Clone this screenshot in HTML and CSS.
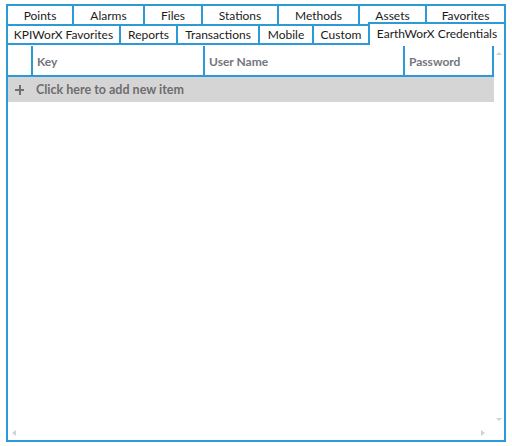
FILE: index.html
```html
<!DOCTYPE html>
<html lang="en">
<head>
  <meta charset="UTF-8">
  <meta name="viewport" content="width=device-width, initial-scale=1.0">
  <title>EarthWorX Credentials</title>
  <link rel="stylesheet" href="styles.css">
</head>
<body>
  <div class="tab-control">
    <div class="tab-row row-top">
      <div class="tab tab-points">Points</div>
      <div class="tab tab-alarms">Alarms</div>
      <div class="tab tab-files">Files</div>
      <div class="tab tab-stations">Stations</div>
      <div class="tab tab-methods">Methods</div>
      <div class="tab tab-assets">Assets</div>
      <div class="tab tab-favorites">Favorites</div>
    </div>
    <div class="tab-row row-bottom">
      <div class="tab tab-kpi">KPIWorX Favorites</div>
      <div class="tab tab-reports">Reports</div>
      <div class="tab tab-transactions">Transactions</div>
      <div class="tab tab-mobile">Mobile</div>
      <div class="tab tab-custom">Custom</div>
      <div class="tab tab-credentials selected">EarthWorX Credentials</div>
    </div>

    <div class="tab-panel">
      <div class="grid-main">
        <div class="grid">
          <div class="grid-header">
            <div class="cell cell-indicator"></div>
            <div class="cell cell-key">Key</div>
            <div class="cell cell-user">User Name</div>
            <div class="cell cell-password">Password</div>
          </div>
          <div class="new-row">
            <span class="plus"></span>
            <span>Click here to add new item</span>
          </div>
          <div class="grid-body"></div>
        </div>
        <div class="vscroll">
          <span class="arrow arrow-up"></span>
          <span class="arrow arrow-down"></span>
        </div>
      </div>
      <div class="hscroll">
        <span class="arrow arrow-left"></span>
        <span class="arrow arrow-right"></span>
      </div>
    </div>
  </div>
</body>
</html>
```
FILE: styles.css
```css
* {
  box-sizing: border-box;
}
body {
  margin: 0;
  padding: 4px 0 0 6px;
  background-color: #fff;
  font-family: Lato, "Noto Sans", sans-serif;
  font-size: 12px;
  color: #1b1b1b;
}
.tab-control {
  width: 500px;
}
.tab-row {
  display: flex;
  align-items: flex-start;
}
.tab {
  display: flex;
  align-items: center;
  justify-content: center;
  flex: 0 0 auto;
  border: 2px solid #2b9ad5;
  border-bottom: none;
  background-color: #fff;
  white-space: nowrap;
  margin-left: -2px;
}
.tab:first-child {
  margin-left: 0;
}
.row-top .tab {
  height: 20px;
}
.row-bottom .tab {
  height: 19px;
}
.row-bottom .tab.selected {
  position: relative;
  z-index: 1;
  height: 23px;
  margin-top: -2px;
  margin-bottom: -2px;
  padding-bottom: 3px;
}

.tab-points { width: 68px; }
.tab-alarms { width: 73px; }
.tab-files { width: 60px; }
.tab-stations { width: 78px; }
.tab-methods { width: 83px; }
.tab-assets { width: 69px; }
.tab-favorites { width: 81px; }

.tab-kpi { width: 115px; }
.tab-reports { width: 59px; }
.tab-transactions { width: 84px; }
.tab-mobile { width: 56px; }
.tab-custom { width: 58px; }
.tab-credentials { width: 138px; }

.tab-panel {
  display: flex;
  flex-direction: column;
  height: 399px;
  border: 2px solid #2b9ad5;
  padding-top: 1px;
}
.grid-main {
  display: flex;
  flex: 1;
}
.grid {
  display: flex;
  flex-direction: column;
  width: 486px;
}
.grid-header {
  display: flex;
  height: 31px;
  border-bottom: 2px solid #2b9ad5;
  margin-left: -2px;
  width: 488px;
}
.cell {
  display: flex;
  align-items: center;
  padding-left: 4px;
  padding-top: 1px;
  font-weight: 700;
  color: #72767d;
}
.cell-indicator {
  width: 25px;
}
.cell-key {
  width: 172px;
  border-left: 2px solid #2b9ad5;
}
.cell-user {
  width: 200px;
  border-left: 2px solid #2b9ad5;
}
.cell-password {
  width: 91px;
  border-left: 2px solid #2b9ad5;
  border-right: 2px solid #2b9ad5;
}
.new-row {
  display: flex;
  align-items: center;
  height: 25px;
  background-color: #d6d5d6;
  color: #6d6d6d;
  font-weight: 700;
  font-size: 12.5px;
}
.new-row .plus {
  position: relative;
  width: 9px;
  height: 9px;
  margin: 0 12px 0 7px;
}
.new-row .plus::before,
.new-row .plus::after {
  content: "";
  position: absolute;
  background-color: #707070;
}
.new-row .plus::before {
  left: 0;
  top: 4px;
  width: 9px;
  height: 2px;
}
.new-row .plus::after {
  left: 3.5px;
  top: 0;
  width: 2px;
  height: 10px;
}
.grid-body {
  flex: 1;
}
.vscroll {
  display: flex;
  flex-direction: column;
  justify-content: space-between;
  align-items: center;
  width: 14px;
  padding: 6px 0 4px;
}
.hscroll {
  display: flex;
  justify-content: space-between;
  align-items: center;
  height: 15px;
  padding: 0 19px 0 4px;
}
.arrow {
  width: 0;
  height: 0;
  border: 3px solid transparent;
}
.arrow-up {
  border-bottom: 3px solid #d2d2d2;
  border-top-width: 0;
}
.arrow-down {
  border-top: 3px solid #d2d2d2;
  border-bottom-width: 0;
}
.arrow-left {
  border-right: 4px solid #d2d2d2;
  border-left-width: 0;
}
.arrow-right {
  border-left: 4px solid #d2d2d2;
  border-right-width: 0;
}
```
